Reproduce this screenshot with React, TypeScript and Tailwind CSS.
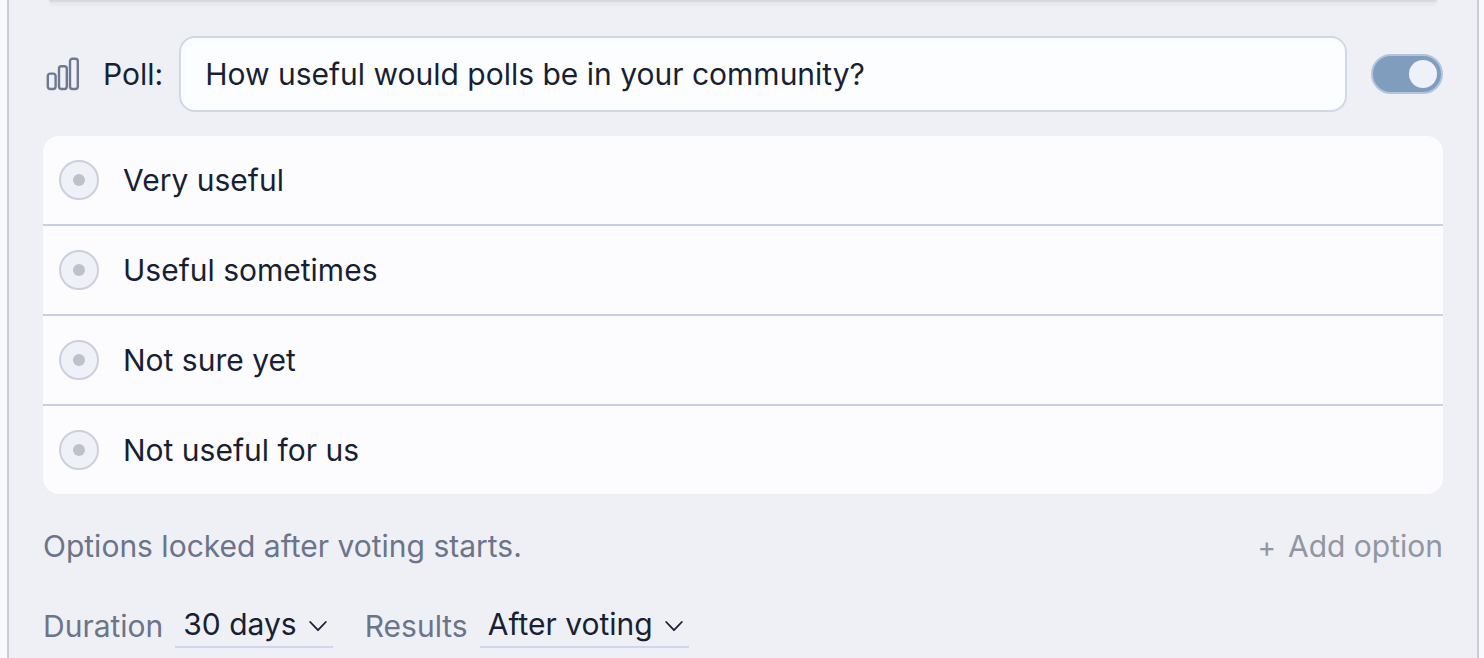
import { useState } from 'react';

const OPTIONS = ['Very useful', 'Useful sometimes', 'Not sure yet', 'Not useful for us'];

function PollIcon() {
  return (
    <svg
      viewBox="0 0 34 34"
      className="h-[34px] w-[34px] shrink-0 text-[#6e7890]"
      fill="none"
      stroke="currentColor"
      strokeWidth="2.4"
      aria-hidden="true"
    >
      <rect x="2.8" y="16.6" width="7.8" height="15.4" rx="2.4" />
      <rect x="14" y="9.2" width="7.8" height="22.8" rx="2.4" />
      <rect x="25" y="1.8" width="7.8" height="30.2" rx="2.4" />
    </svg>
  );
}

function InlineSelect({ id, label, choices }: { id: string; label: string; choices: string[] }) {
  return (
    <div className="flex items-center gap-3">
      <label htmlFor={id} className="text-[#6b7489]">
        {label}
      </label>
      <div className="relative">
        <select
          id={id}
          className="h-11 appearance-none border-b-2 border-[#cfd7e8] bg-transparent pr-9 pb-0.5 pl-2 text-[#181f33] outline-none [field-sizing:content]"
        >
          {choices.map((choice) => (
            <option key={choice}>{choice}</option>
          ))}
        </select>
        <svg
          viewBox="0 0 18 12"
          className="pointer-events-none absolute top-4 right-1.5 h-3 w-[18px] text-[#181f33]"
          fill="none"
          stroke="currentColor"
          strokeWidth="1.8"
          strokeLinecap="round"
          strokeLinejoin="round"
          aria-hidden="true"
        >
          <path d="M1.2 2 9 10.2 16.8 2" />
        </svg>
      </div>
    </div>
  );
}

export default function App() {
  const [question, setQuestion] = useState('How useful would polls be in your community?');
  const [enabled, setEnabled] = useState(true);

  return (
    <div className="min-h-screen bg-[#f7f9fd] pr-[5px] pl-[7px] font-['Inter',sans-serif] text-[30px] leading-9 text-[#181f33]">
      <main className="min-h-screen border-x-2 border-[#c9cdd6] bg-[#eef0f6] px-[34px]">
        {/* bottom edge of the editor above */}
        <div className="mx-1.5 h-0.5 rounded-b-sm bg-[#d8d9de] shadow-[0_1px_4px_#d0d2d9]" />

        <div className="mt-[34px] flex items-center">
          <label htmlFor="question" className="flex items-center gap-6 pr-4 pl-0.5">
            <PollIcon />
            Poll:
          </label>
          <input
            id="question"
            type="text"
            value={question}
            onChange={(e) => setQuestion(e.target.value)}
            className="h-[76px] min-w-0 flex-1 rounded-2xl border-2 border-[#d0d7e7] bg-[#fcfdff] px-6 outline-none"
          />
          <input
            type="checkbox"
            role="switch"
            aria-label="Enable poll"
            checked={enabled}
            onChange={(e) => setEnabled(e.target.checked)}
            className="ml-6 flex h-10 w-[72px] shrink-0 appearance-none items-center rounded-full border-2 border-[#b1c5de] bg-[#c3cad8] px-1 before:size-7 before:rounded-full before:bg-[#eff1f8] checked:justify-end checked:bg-[#819dbd]"
          />
        </div>

        <div role="radiogroup" aria-label={question} className="mt-6 divide-y-2 divide-[#c5d0e2] overflow-hidden rounded-2xl bg-[#fcfcfe]">
          {OPTIONS.map((option) => (
            <label key={option} className="flex h-[90px] items-center gap-6 px-4 last:h-[88px]">
              <input
                type="radio"
                name="poll"
                value={option}
                className="grid size-10 shrink-0 appearance-none place-content-center rounded-full border-2 border-[#cccfdd] bg-[#eff1f8] before:size-3 before:rounded-full before:bg-[#bec1cc]"
              />
              {option}
            </label>
          ))}
        </div>

        <div className="mt-[34px] flex items-center justify-between">
          <p className="text-[#6b7489]">Options locked after voting starts.</p>
          <button type="button" className="flex items-baseline gap-3 text-[#9296a3]">
            <span className="text-[28px] leading-none">+</span>
            Add option
          </button>
        </div>

        <div className="mt-10 flex items-center gap-8">
          <InlineSelect id="duration" label="Duration" choices={['30 days', '14 days', '7 days']} />
          <InlineSelect id="results" label="Results" choices={['After voting', 'Always visible']} />
        </div>
      </main>
    </div>
  );
}
